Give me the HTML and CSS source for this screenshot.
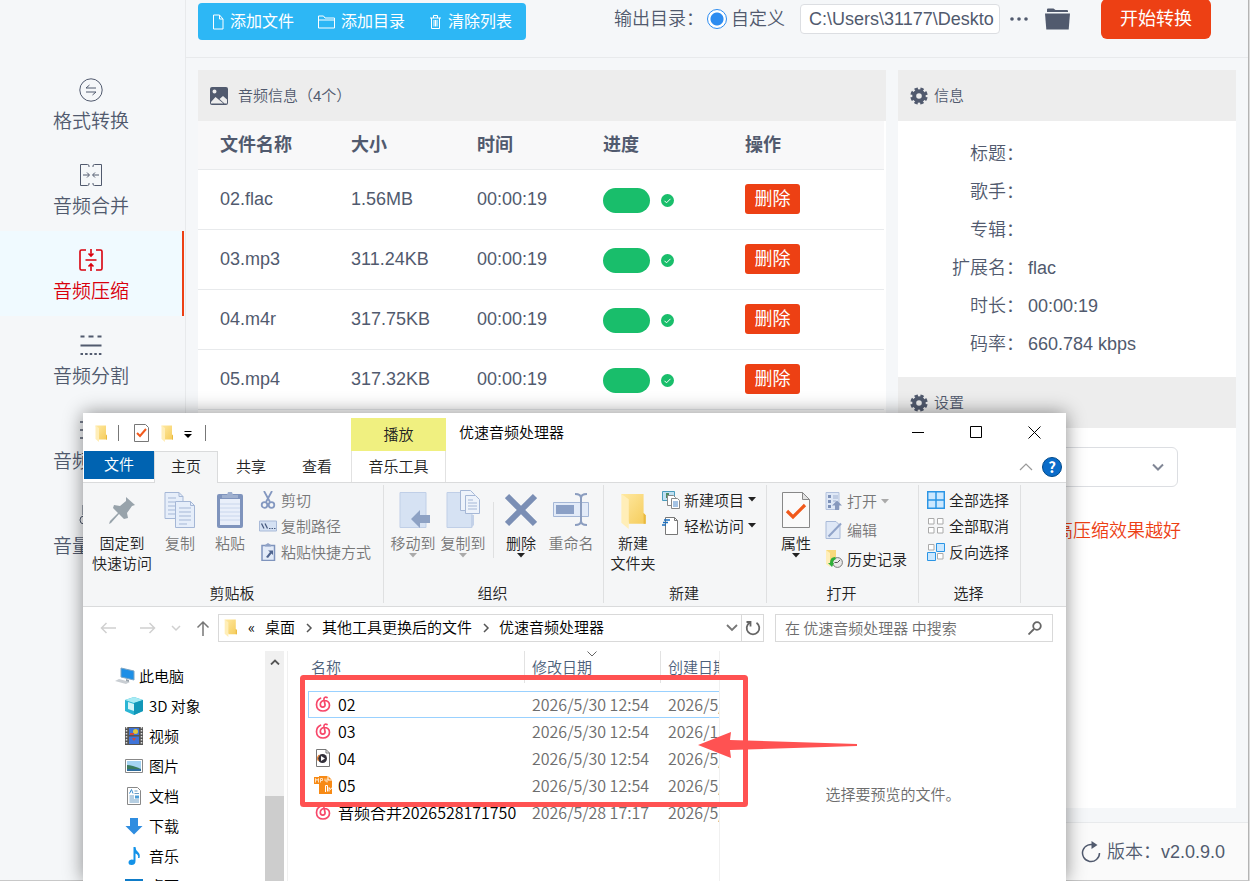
FILE: index.html
```html
<!DOCTYPE html>
<html lang="zh-CN">
<head>
  <meta charset="UTF-8">
  <meta name="viewport" content="width=device-width, initial-scale=1.0">
  <title>优速音频处理器</title>
  <link rel="stylesheet" href="styles.css">
</head>
<body>
  <!-- shared icons -->
  <svg class="sprite" aria-hidden="true">
    <defs>
      <linearGradient id="g-folder" x1="0" y1="0" x2="1" y2="1">
        <stop offset="0" stop-color="#ffe9a2"/><stop offset="1" stop-color="#f5cc5b"/>
      </linearGradient>
    </defs>
    <symbol id="i-folder" viewBox="0 0 24 34">
      <path d="M1 1h21v18l2 2v8H8z" fill="url(#g-folder)"/>
      <path d="M1 1l7 5v28l-7-6z" fill="#ffeeb8"/>
      <path d="M22 19l2 2v8h-2z" fill="#e9b93f"/>
    </symbol>
    <symbol id="i-gear" viewBox="0 0 18 18">
      <g fill="none" stroke="currentColor">
        <circle cx="9" cy="9" r="4.800" stroke-width="4"/>
        <circle cx="9" cy="9" r="7.300" stroke-width="2.800" stroke-dasharray="3.330 2.400" transform="rotate(9 9 9)"/>
      </g>
    </symbol>
    <symbol id="i-music" viewBox="0 0 16 16">
      <path d="M5.500 2.200C3 3.300 1.500 6 1.500 8.800 1.500 12.500 4.300 15 8 15s6.500-2.500 6.500-5.800C14.500 6 12 4.500 9.500 4.500 7 4.500 5.300 6 5.300 8.300c0 1.700 1 2.900 2.500 2.900s2.500-1.200 2.200-2.700L9 3.500C8.700 1.500 10.500.500 12 1.500" fill="none" stroke="#f7476a" stroke-width="1.700" stroke-linecap="round"/>
    </symbol>
    <symbol id="i-caret" viewBox="0 0 8 5"><path d="M0 0h8L4 4.500z" fill="currentColor"/></symbol>
    <symbol id="i-done" viewBox="0 0 13 13">
      <circle cx="6.500" cy="6.500" r="6.500" fill="#19be6b"/>
      <path d="M3.500 6.800l2 2 4-4" fill="none" stroke="#fff"/>
    </symbol>
    <symbol id="i-next" viewBox="0 0 8 10"><path d="M2 1l4 4-4 4" fill="none" stroke="#555" stroke-width="1.500"/></symbol>
  </svg>

  <div class="app">
    <nav class="sidebar">
      <a class="nav-item" href="#">
        <svg viewBox="0 0 24 24"><circle cx="12" cy="12" r="11.200"/><path d="M7 10h10M7 10l3.500-3M7 14h10M17 14l-3.500 3"/></svg>
        <span>格式转换</span>
      </a>
      <a class="nav-item" href="#">
        <svg viewBox="0 0 24 24"><path d="M10 4V3q0-1.500-1.500-1.500H1.500v21H8.500q1.500 0 1.500-1.500v-1M14 4V3q0-1.500 1.500-1.500h7v21h-7q-1.500 0-1.500-1.500v-1M4 12h6M8 9.500l2.500 2.500L8 14.500M20 12h-6M16 9.500L13.500 12l2.500 2.500"/></svg>
        <span>音频合并</span>
      </a>
      <a class="nav-item active" href="#">
        <svg viewBox="0 0 24 24"><path d="M7 2H2.500Q1 2 1 3.500v17Q1 22 2.500 22H7M17 2h4.500Q23 2 23 3.500v17q0 1.500-1.500 1.500H17M6.500 12h11M12 1v7M9.500 5.500L12 8l2.500-2.500M12 23v-7M9.500 18.500L12 16l2.500 2.500"/></svg>
        <span>音频压缩</span>
      </a>
      <a class="nav-item" href="#">
        <svg viewBox="0 0 24 24"><path d="M1.500 3.500h4M9.500 3.500h5M18.500 3.500h4M1.500 12.500h21" stroke-width="2"/><path d="M1.500 21h21" stroke-width="2" stroke-dasharray="2.500 2.100"/></svg>
        <span>音频分割</span>
      </a>
      <a class="nav-item" href="#">
        <svg viewBox="0 0 24 24"><path d="M1 4h14M1 12h14M1 20h14" stroke-width="1.500"/></svg>
        <span>音频提取</span>
      </a>
      <a class="nav-item" href="#">
        <svg viewBox="0 0 24 24"><path d="M4 2v10"/><circle cx="5" cy="17" r="4"/></svg>
        <span>音量调整</span>
      </a>
    </nav>

    <main class="main">
      <header class="toolbar">
        <div class="file-actions">
          <button type="button">
            <svg width="12" height="16" viewBox="0 0 12 16"><path d="M1.500 1h6L11 5v10H1.500zM7.500 1v4H11"/></svg>
            添加文件
          </button>
          <button type="button">
            <svg width="17" height="16" viewBox="0 0 17 16"><path d="M.500 14V2h5l1.500 2h9.500v10zM.500 6h16"/></svg>
            添加目录
          </button>
          <button type="button">
            <svg width="13" height="16" viewBox="0 0 13 16"><path d="M1 4h11M4.500 4V1.500h4V4M2.500 4v10.500h8V4M5 6v6.500M6.500 6v6.500M8 6v6.500"/></svg>
            清除列表
          </button>
        </div>

        <div class="output">
          <span>输出目录：</span>
          <label class="radio"><input type="radio" name="output" checked>自定义</label>
          <input class="output-path" type="text" value="C:\Users\31177\Deskto" aria-label="输出目录" readonly>
          <button class="more" type="button" aria-label="浏览">
            <svg width="18" height="6" viewBox="0 0 18 6"><circle cx="2" cy="3" r="1.800"/><circle cx="9" cy="3" r="1.800"/><circle cx="16" cy="3" r="1.800"/></svg>
          </button>
          <button class="open-dir" type="button" aria-label="打开目录">
            <svg width="25" height="22" viewBox="0 0 25 22"><path d="M2 4V1.500Q2 .500 3 .500h5.500l2 1.500H22q1 0 1 1v1z"/><path d="M0 5.500h25l-1.300 16H1.300z"/></svg>
          </button>
          <button class="start" type="button">开始转换</button>
        </div>
      </header>

      <div class="content">
        <section class="panel list-panel">
          <h2 class="panel-title list-title">
            <svg width="18" height="18" viewBox="0 0 18 18"><path fill="currentColor" fill-rule="evenodd" d="M2 0h14q2 0 2 2v14q0 2-2 2H2q-2 0-2-2V2q0-2 2-2zM4.500 2.500a2 2 0 1 0 0 4 2 2 0 0 0 0-4zM1 15v1.500h12.500L5.500 10zM9.500 12l5 4.500H17v-4l-4-3.500z"/></svg>
            音频信息（4个）
          </h2>
          <table class="audio-table">
            <colgroup><col class="c-name"><col class="c-size"><col class="c-time"><col class="c-progress"><col></colgroup>
            <thead>
              <tr><th>文件名称</th><th>大小</th><th>时间</th><th>进度</th><th>操作</th></tr>
            </thead>
            <tbody>
              <tr>
                <td>02.flac</td><td>1.56MB</td><td>00:00:19</td>
                <td><div class="progress"><span class="bar"></span><svg width="13" height="13"><use href="#i-done"/></svg></div></td>
                <td><button class="delete" type="button">删除</button></td>
              </tr>
              <tr>
                <td>03.mp3</td><td>311.24KB</td><td>00:00:19</td>
                <td><div class="progress"><span class="bar"></span><svg width="13" height="13"><use href="#i-done"/></svg></div></td>
                <td><button class="delete" type="button">删除</button></td>
              </tr>
              <tr>
                <td>04.m4r</td><td>317.75KB</td><td>00:00:19</td>
                <td><div class="progress"><span class="bar"></span><svg width="13" height="13"><use href="#i-done"/></svg></div></td>
                <td><button class="delete" type="button">删除</button></td>
              </tr>
              <tr>
                <td>05.mp4</td><td>317.32KB</td><td>00:00:19</td>
                <td><div class="progress"><span class="bar"></span><svg width="13" height="13"><use href="#i-done"/></svg></div></td>
                <td><button class="delete" type="button">删除</button></td>
              </tr>
            </tbody>
          </table>
        </section>

        <section class="panel info-panel">
          <h2 class="panel-title"><svg width="18" height="18"><use href="#i-gear"/></svg>信息</h2>
          <dl class="info">
            <dt>标题：</dt><dd></dd>
            <dt>歌手：</dt><dd></dd>
            <dt>专辑：</dt><dd></dd>
            <dt>扩展名：</dt><dd>flac</dd>
            <dt>时长：</dt><dd>00:00:19</dd>
            <dt>码率：</dt><dd>660.784 kbps</dd>
          </dl>
          <h2 class="panel-title"><svg width="18" height="18"><use href="#i-gear"/></svg>设置</h2>
          <div class="settings">
            <div class="select-box">
              <select aria-label="设置"><option></option></select>
              <svg width="14" height="9" viewBox="0 0 14 9"><path d="M2 1.500l5 5 5-5"/></svg>
            </div>
            <p class="hint">高压缩效果越好</p>
          </div>
        </section>
      </div>

      <footer class="footer">
        <svg width="20" height="22" viewBox="0 0 20 22"><path d="M14 4.500A8.500 8.500 0 1 0 18.500 12" fill="none" stroke="currentColor" stroke-width="1.500"/><path d="M10.500 0l6 4-6 4z" fill="currentColor"/></svg>
        <span>版本：</span><span>v2.0.9.0</span>
      </footer>
    </main>
  </div>

  <div class="explorer">
    <div class="titlebar">
      <div class="quick-access">
        <svg width="12" height="17"><use href="#i-folder"/></svg>
        <i class="bar-sep"></i>
        <svg class="qa-check" width="15" height="18" viewBox="0 0 15 18"><path d="M.500.500h11l3 3v14H.500z" fill="#fff" stroke="#777"/><path d="M3 9l3 3 6-7" fill="none" stroke="#f25a1d" stroke-width="2"/></svg>
        <svg width="12" height="17"><use href="#i-folder"/></svg>
        <svg class="qa-menu" width="8" height="7" viewBox="0 0 8 7"><path d="M.500 0h7v1h-7zM0 3h8L4 7z"/></svg>
        <i class="bar-sep"></i>
      </div>
      <div class="context-tab">播放</div>
      <div class="window-title">优速音频处理器</div>
      <div class="window-buttons">
        <button type="button" aria-label="最小化"><svg width="13" height="13" viewBox="0 0 13 13"><path d="M0 6.500h12"/></svg></button>
        <button type="button" aria-label="最大化"><svg width="13" height="13" viewBox="0 0 13 13"><path d="M.500.500h11v11H.500z"/></svg></button>
        <button type="button" aria-label="关闭"><svg width="13" height="13" viewBox="0 0 13 13"><path d="M.500.500l12 12M12.500.500l-12 12"/></svg></button>
      </div>
    </div>

    <div class="tabs">
      <button class="tab tab-file" type="button">文件</button>
      <button class="tab tab-home" type="button">主页</button>
      <button class="tab" type="button">共享</button>
      <button class="tab" type="button">查看</button>
      <button class="tab tab-context" type="button">音乐工具</button>
      <div class="tabs-right">
        <svg width="14" height="8" viewBox="0 0 14 8"><path d="M1 7l6-6 6 6" fill="none" stroke="#999" stroke-width="1.200"/></svg>
        <button class="help" type="button" aria-label="帮助">?</button>
      </div>
    </div>

    <div class="ribbon">
      <div class="group group-clipboard">
        <div class="group-body">
          <button class="big wide" type="button">
            <svg width="28" height="40" viewBox="0 0 28 40"><path d="M18 7l9 8-3 1-5 7 1 5-4 1-5-5-8 9-2 1 1-3 8-8-5-5 1-3 6 1 6-5z" fill="#98a3ab"/></svg>
            <span>固定到<br>快速访问</span>
          </button>
          <button class="big off" type="button">
            <svg width="32" height="40" viewBox="0 0 32 40"><g fill="#e6eefa" stroke="#a5b7d6"><path d="M1 2.500h14l4 4v22H1z"/><path d="M11.500 11.500h15l4 4v22h-19z"/><path d="M15 2.500v4h4M26.500 11.500v4h4M4 8h8M4 12h7M4 16h7M4 20h7M4 24h7M15 18h12M15 22h12M15 26h12M15 30h12M15 34h8" fill="none"/></g></svg>
            <span>复制</span>
          </button>
          <button class="big off" type="button">
            <svg width="28" height="40" viewBox="0 0 28 40"><rect x="1" y="4" width="26" height="34" rx="2" fill="#7f94bd"/><path d="M4 9h20v26H4z" fill="#e9effa"/><path d="M4 14h20M4 18h20M4 22h20M4 26h20M4 30h20" stroke="#c9d6ec"/><path d="M6 8V5h5l1-3h4l1 3h5v3z" fill="#9fb0cf"/></svg>
            <span>粘贴</span>
          </button>
          <div class="small-list">
            <button class="small off" type="button">
              <svg width="18" height="18" viewBox="0 0 18 18"><g fill="none" stroke="#8498c0" stroke-width="1.800"><path d="M5 0l6 11M13 0L7 11"/><circle cx="5.500" cy="14" r="2.800"/><circle cx="12.500" cy="14" r="2.800"/></g></svg>剪切
            </button>
            <button class="small off" type="button">
              <svg width="18" height="18" viewBox="0 0 18 18"><path d="M.500 4h17v10H.500z" fill="#d5e1f3" stroke="#a9bad8"/><path d="M2.500 6.500l2.500 5M6 6.500l2.500 5" stroke="#46597e" stroke-width="1.300"/><path d="M10 11.500h1.500M12.500 11.500H14M15 11.500h1.500" stroke="#46597e"/></svg>复制路径
            </button>
            <button class="small off" type="button">
              <svg width="18" height="18" viewBox="0 0 18 18"><path d="M3 2.500h12.500v15H3z" fill="#e3ebf8" stroke="#7f94bd" stroke-width="1.500"/><path d="M6 3.500V2l3-2 3 2v1.500z" fill="#8fa2c6"/><path d="M7 14l4-5-2-1.500h5V12l-1.500-1.500L9 15z" fill="#50658f"/></svg>粘贴快捷方式
            </button>
          </div>
        </div>
        <div class="group-name">剪贴板</div>
      </div>

      <div class="group group-organize">
        <div class="group-body">
          <button class="big off" type="button">
            <svg width="34" height="40" viewBox="0 0 34 40"><path d="M4 2.500h26v35H4z" fill="#d6e2f3" stroke="#c0cfe7"/><path d="M15 29l9-9v5h10v8H24v5z" fill="#8ea2c4"/></svg>
            <span>移动到</span><svg class="caret" width="8" height="5"><use href="#i-caret"/></svg>
          </button>
          <button class="big off" type="button">
            <svg width="34" height="40" viewBox="0 0 34 40"><path d="M1 2.500h25v35H1z" fill="#d6e2f3" stroke="#c0cfe7"/><path d="M25 25h3v10l-3 3z" fill="#c3d1e8"/><g fill="#eef3fb" stroke="#a5b7d6"><path d="M14.500.500h10l4 4v16h-14z"/><path d="M19.500 5.500h10l4 4v14h-14z"/><path d="M22 10h5M22 13h9M22 16h9M22 19h9"/></g></svg>
            <span>复制到</span><svg class="caret" width="8" height="5"><use href="#i-caret"/></svg>
          </button>
          <i class="inner-sep"></i>
          <button class="big" type="button">
            <svg width="32" height="40" viewBox="0 0 32 40"><path d="M2 6l28 28M30 6L2 34" stroke="#7b8fb5" stroke-width="6"/></svg>
            <span>删除</span><svg class="caret" width="8" height="5"><use href="#i-caret"/></svg>
          </button>
          <button class="big off" type="button">
            <svg width="36" height="40" viewBox="0 0 36 40"><path d="M.500 12.500h35v14H.500z" fill="#e3ebf8" stroke="#a5b7d6"/><path d="M3 15h18v9H3z" fill="#8ba0c6"/><path d="M22 4q6 0 6 4v23q0 4-6 4M34 4q-6 0-6 4v23q0 4 6 4" fill="none" stroke="#8b9dbf" stroke-width="2"/></svg>
            <span>重命名</span>
          </button>
        </div>
        <div class="group-name">组织</div>
      </div>

      <div class="group group-new">
        <div class="group-body">
          <button class="big" type="button">
            <svg width="26" height="40" viewBox="0 -2 26 38"><use href="#i-folder" width="26" height="36"/></svg>
            <span>新建<br>文件夹</span>
          </button>
          <div class="small-list">
            <button class="small" type="button">
              <svg width="18" height="18" viewBox="0 0 18 18"><path d="M.500.500h12v9H.500z" fill="#bfe0f2" stroke="#4a9cbd"/><path d="M4 2h3v5H4z" fill="#4a8a62"/><path d="M5.500 4.500h6l2 2v8h-8z" fill="#fff" stroke="#888"/><path d="M9.500 7.500h6l2 2v8h-8z" fill="#fff" stroke="#888"/><path d="M11 11h5M11 13h5M11 15h5" stroke="#4a86c8"/></svg>新建项目<svg class="caret" width="8" height="5"><use href="#i-caret"/></svg>
            </button>
            <button class="small" type="button">
              <svg width="18" height="18" viewBox="0 0 18 18"><path d="M3.500.500h9l3 3v14h-12z" fill="#fff" stroke="#777"/><path d="M12.500.500v3h3" fill="none" stroke="#777"/><path d="M2 3h6M1 5.500h5M0 8h4" stroke="#1b6fc0" stroke-width="1.400"/></svg>轻松访问<svg class="caret" width="8" height="5"><use href="#i-caret"/></svg>
            </button>
          </div>
        </div>
        <div class="group-name">新建</div>
      </div>

      <div class="group group-open">
        <div class="group-body">
          <button class="big" type="button">
            <svg width="28" height="40" viewBox="0 0 28 40"><path d="M.500 2.500h20l7 7v28H.500z" fill="#fafafa" stroke="#888"/><path d="M20.500 2.500v7h7z" fill="#e2e2e2" stroke="#888"/><path d="M5 21l6 6 12-12" fill="none" stroke="#f1591b" stroke-width="3.200"/></svg>
            <span>属性</span><svg class="caret" width="8" height="5"><use href="#i-caret"/></svg>
          </button>
          <div class="small-list tall">
            <button class="small off" type="button">
              <svg width="18" height="18" viewBox="0 0 18 18"><path d="M1 .500h13v17H1z" fill="#dfe8f6" stroke="#b3c2dd"/><path d="M3 3h3v3H3zM3 8h3v3H3zM3 13h3v3H3z" fill="#7d91b8"/><path d="M8 4h5M8 6h5M8 9h3" stroke="#9fb0cf"/><path d="M7 13.500l5-5 5 5h-3V18h-4v-4.500z" fill="#8799bd"/></svg>打开<svg class="caret" width="8" height="5"><use href="#i-caret"/></svg>
            </button>
            <button class="small off" type="button">
              <svg width="18" height="18" viewBox="0 0 18 18"><path d="M1 .500h10l4 4v13H1z" fill="#dfe8f6" stroke="#a9bad8"/><path d="M3.500 15.500L16 2.500" stroke="#91a4c9" stroke-width="2"/></svg>编辑
            </button>
            <button class="small" type="button">
              <svg width="18" height="18" viewBox="0 0 18 18"><path d="M1 0h10v15H5z" fill="#f8d97c"/><path d="M1 0l4 3v14l-4-3z" fill="#ffeeb8"/><circle cx="12.500" cy="12.500" r="4.900" fill="#e8e8e8" stroke="#777"/><path d="M12.500 12.500l2.500-2.500M12.500 12.500h-3" stroke="#555"/><path d="M10 7q-5 0-5 6H3l4 4 2-4H8q0-3 3-4z" fill="#2fae3a"/></svg>历史记录
            </button>
          </div>
        </div>
        <div class="group-name">打开</div>
      </div>

      <div class="group group-select">
        <div class="group-body">
          <div class="small-list">
            <button class="small" type="button">
              <svg width="18" height="18" viewBox="0 0 18 18"><path d="M.700.700h16.600v16.600H.700zM9 0v18M0 9h18" fill="#cbe8ff" stroke="#2b95e5" stroke-width="1.500"/></svg>全部选择
            </button>
            <button class="small" type="button">
              <svg width="18" height="18" viewBox="0 0 18 18"><path d="M1.500 1.500h5.500v5.500H1.500zM10.500 1.500H16v5.500h-5.500zM1.500 10.500h5.500V16H1.500zM10.500 10.500H16V16h-5.500z" fill="#fff" stroke="#aaa"/></svg>全部取消
            </button>
            <button class="small" type="button">
              <svg width="18" height="18" viewBox="0 0 18 18"><path d="M1.500 1.500h5.500v5.500H1.500zM10.500 10.500H16V16h-5.500z" fill="#fff" stroke="#aaa"/><path d="M9.500.500h8v8h-8zM.500 9.500h8v8h-8z" fill="#cbe8ff" stroke="#2b95e5"/></svg>反向选择
            </button>
          </div>
        </div>
        <div class="group-name">选择</div>
      </div>
    </div>

    <div class="address-row">
      <div class="history">
        <svg class="back" width="16" height="14" viewBox="0 0 16 14"><path d="M16 7H1M6.500 2L1.500 7l5 5" stroke="#d0d0d0"/></svg>
        <svg width="16" height="14" viewBox="0 0 16 14"><path d="M0 7h15M9.500 2l5 5-5 5" stroke="#d0d0d0"/></svg>
        <svg width="10" height="14" viewBox="0 0 10 14"><path d="M1 5l4 4 4-4" stroke="#d0d0d0"/></svg>
        <svg width="14" height="16" viewBox="0 0 14 16"><path d="M7 16V2M1.500 7.500L7 2l5.500 5.500" stroke="#777" stroke-width="1.800"/></svg>
      </div>
      <div class="address">
        <svg width="13" height="18"><use href="#i-folder"/></svg>
        <span class="laquo">«</span>
        <a href="#">桌面</a>
        <svg class="next" width="8" height="10"><use href="#i-next"/></svg>
        <a href="#">其他工具更换后的文件</a>
        <svg class="next" width="8" height="10"><use href="#i-next"/></svg>
        <a href="#">优速音频处理器</a>
        <svg class="drop" width="12" height="8" viewBox="0 0 12 8"><path d="M1 1l5 5 5-5" fill="none" stroke="#777" stroke-width="1.800"/></svg>
        <button class="refresh" type="button" aria-label="刷新"><svg width="16" height="16" viewBox="0 0 16 16"><path d="M4.500 2.800A6.300 6.300 0 1 0 11.500 2.800M1.500 2h4v4.500" fill="none" stroke="#666" stroke-width="1.800"/></svg></button>
      </div>
      <div class="search">
        <input type="text" placeholder="在 优速音频处理器 中搜索" aria-label="搜索">
        <svg width="14" height="14" viewBox="0 0 14 14"><circle cx="9" cy="5" r="3.800"/><path d="M6 8l-5.500 5.500"/></svg>
      </div>
    </div>

    <div class="explorer-body">
      <div class="tree">
        <ul>
          <li class="root"><svg width="20" height="18" viewBox="0 0 20 18"><path d="M6 1l13 3v9L6 10z" fill="#1e8fe6" stroke="#7aa4c4"/><path d="M0 14l4-2 11 3-4 2z" fill="#c9ced3"/><path d="M11 12l3 1v2l-3-1z" fill="#98a2ab"/></svg>此电脑</li>
          <li><svg width="18" height="18" viewBox="0 0 18 18"><path d="M9 0l9 3v11l-9 4-9-4V3z" fill="#2bb5d4"/><path d="M9 0l9 3-9 3-9-3z" fill="#a8ebf4"/><path d="M9 6l9-3v11l-9 4z" fill="#1297b8"/><path d="M3 5l6 2v7l-6-2z" fill="#d6f5f9"/></svg>3D 对象</li>
          <li><svg width="18" height="18" viewBox="0 0 18 18"><path d="M0 0h18v18H0z" fill="#555"/><path d="M1.500 0v18M16.500 0v18" stroke="#ddd" stroke-width="1.500" stroke-dasharray="1.500 1.500"/><path d="M4 1h10v7H4zM4 9.500h10V17H4z" fill="#3f74d8"/><circle cx="10.500" cy="4.500" r="2.500" fill="#e0c73a"/><path d="M5 6h4v2H5zM7 11h4l-2 3z" fill="#d34a3c"/></svg>视频</li>
          <li><svg width="18" height="18" viewBox="0 0 18 18"><path d="M.500 2.500h17v13H.500z" fill="#fff" stroke="#888"/><path d="M2 4h14v10H2z" fill="#a4d3f2"/><path d="M2 8q5 0 14 4v2H2z" fill="#397a5d"/><path d="M2 12h14v2H2z" fill="#2d6c9c"/></svg>图片</li>
          <li><svg width="18" height="18" viewBox="0 0 18 18"><path d="M2.500.500h10l3 3v14h-13z" fill="#fff" stroke="#888"/><path d="M4.500 6.500l2-4 1.500 4" fill="none" stroke="#3b8ed0"/><path d="M9.500 4h3M9.500 6.500h4.500M4.500 9H9M4.500 11H9M4.500 13h9.500M4.500 15h9.500" stroke="#6d9ec5"/><path d="M10 8.500h4v3h-4z" fill="#4e9ed8"/></svg>文档</li>
          <li><svg width="18" height="18" viewBox="0 0 18 18"><path d="M5 1h8v8h4.500L9 17.500.500 9H5z" fill="#2f8de0"/></svg>下载</li>
          <li><svg width="18" height="18" viewBox="0 0 18 18"><path d="M8.500 0h2q0 3 2.500 5t1.500 6h-1.500q1-3-2.500-4.500V14q0 4-4 4-3 0-3-2.500Q3.500 13 6.500 12.500q1 0 2 .300z" fill="#1392e8"/></svg>音乐</li>
          <li><svg width="18" height="18" viewBox="0 0 18 18"><path d="M0 2h18v12H0z" fill="#0f7cc8"/></svg>桌面</li>
        </ul>
        <div class="scrollbar">
          <svg width="10" height="6" viewBox="0 0 10 6"><path d="M1 5.500l4-4 4 4" fill="none" stroke="#555" stroke-width="1.800"/></svg>
          <div class="thumb"></div>
        </div>
      </div>

      <div class="files">
        <table>
          <colgroup><col class="f-name"><col class="f-date"><col class="f-date"></colgroup>
          <thead>
            <tr>
              <th>名称</th>
              <th>修改日期<svg class="sort" width="10" height="6" viewBox="0 0 10 6"><path d="M.500.500L5 5 9.500.500" fill="none" stroke="#666"/></svg></th>
              <th>创建日期</th>
            </tr>
          </thead>
          <tbody>
            <tr class="selected"><td><span class="file"><svg width="16" height="16"><use href="#i-music"/></svg>02</span></td><td>2026/5/30 12:54</td><td>2026/5/30 12:54</td></tr>
            <tr><td><span class="file"><svg width="16" height="16"><use href="#i-music"/></svg>03</span></td><td>2026/5/30 12:54</td><td>2026/1/30 12:54</td></tr>
            <tr><td><span class="file"><svg width="16" height="18" viewBox="0 0 16 18"><path d="M1.500.500h9.500l3.500 3.500v13.500h-13z" fill="#fff" stroke="#777"/><path d="M11 .500v3.500h3.500" fill="none" stroke="#777"/><circle cx="7.500" cy="9.500" r="4.500" fill="#33303a"/><path d="M3.500 12a4.500 4.500 0 0 1 1-6" fill="none" stroke="#e98032" stroke-width="1.200"/><path d="M6 7l4 2.500L6 12z" fill="#fff"/></svg>04</span></td><td>2026/5/30 12:54</td><td>2026/5/30 12:54</td></tr>
            <tr><td><span class="file"><svg class="mp4" width="20" height="18" viewBox="0 0 20 18"><path d="M6 0h9l4 4v14H6V8H1V1h5z" fill="#f78a15"/><path d="M2.500 6.500v-4l1.500 2 1.500-2v4M7.500 6.500v-4h2v2h-2M12 2.500v2.500h2.500M14 2.500v4" fill="none" stroke="#fde0bf"/><path d="M15 0v4h4" fill="none" stroke="#fff"/><path d="M12.500 16V9.500h2v6M16 15.500v-4l1.500 2 1.500-2" fill="none" stroke="#fff"/></svg>05</span></td><td>2026/5/30 12:54</td><td>2026/5/30 12:54</td></tr>
            <tr><td><span class="file"><svg width="16" height="16"><use href="#i-music"/></svg>音频合并2026528171750</span></td><td>2026/5/28 17:17</td><td>2026/5/28 17:17</td></tr>
          </tbody>
        </table>
      </div>

      <div class="preview">选择要预览的文件。</div>
    </div>
  </div>

  <!-- red frame and arrow over the converted files -->
  <svg class="marker" width="560" height="134" viewBox="0 0 560 134">
    <rect x="2.500" y="2.500" width="443" height="127" rx="1" fill="none" stroke="#ff5252" stroke-width="5"/>
    <path d="M398 70l33-13-1 8 127 4v2l-127 4 1 8z" fill="#ff5252"/>
  </svg>
</body>
</html>
```

FILE: styles.css
```css
* {
  box-sizing: border-box;
}

body {
  position: relative;
  height: 100vh;
  margin: 0;
  overflow: hidden;
  background-color: #dcdcdc;
  color: #515a6e;
  font-family: "Liberation Sans", "Noto Sans CJK SC", sans-serif;
  font-size: 18px;
  font-weight: 350;
  line-height: 24px;
}

button,
input,
select {
  margin: 0;
  padding: 0;
  border: none;
  background: none;
  color: inherit;
  font: inherit;
}

button {
  cursor: pointer;
}

a {
  color: inherit;
  text-decoration: none;
}

svg {
  flex: none;
}

.sprite {
  position: absolute;
  width: 0;
  height: 0;
}

/* main application */

.app {
  display: flex;
  height: 100%;
  margin-right: 1px;
  border-right: 1px solid #b4b4b4;
  border-bottom: 1px solid #c8c8c8;
  background-color: #f5f7f9;
  overflow: hidden;
}

.sidebar {
  flex: none;
  width: 186px;
  padding-top: 61px;
  padding-right: 1px;
  border-right: 1px solid #e8eaec;
}

.nav-item {
  display: flex;
  flex-direction: column;
  align-items: center;
  gap: 6px;
  height: 85px;
  padding-top: 17px;
  border-right: 2px solid transparent;
  font-size: 19px;
  line-height: 28px;
}

.nav-item svg {
  width: 24px;
  height: 24px;
  fill: none;
  stroke: currentColor;
  stroke-width: 1;
}

.nav-item.active {
  border-right-color: #ed4014;
  background-color: #f0faff;
  color: #d9000d;
}

.nav-item.active svg {
  stroke-width: 1.6;
}

.main {
  display: flex;
  flex: 1;
  flex-direction: column;
  min-width: 0;
}

.toolbar {
  display: flex;
  align-items: flex-start;
  justify-content: space-between;
  height: 58px;
  padding: 0 37px 0 12px;
  border-bottom: 1px solid #e8eaec;
}

.file-actions {
  display: flex;
  gap: 4px;
  height: 37px;
  margin-top: 3px;
  padding: 0 4px;
  border-radius: 4px;
  background-color: #2db7f5;
  color: #fff;
  font-size: 16px;
  font-weight: 400;
}

.file-actions button {
  display: flex;
  align-items: center;
  gap: 6px;
  padding: 0 10px;
}

.file-actions svg {
  fill: none;
  stroke: #fff;
}

.output {
  display: flex;
  align-items: center;
  height: 38px;
}

.radio {
  display: flex;
  align-items: center;
  gap: 4px;
  margin: 0 15px 0 3px;
}

.radio input {
  width: 20px;
  height: 20px;
  border: 1px solid #2d8cf0;
  border-radius: 50%;
  background: radial-gradient(circle, #2d8cf0 6px, #fff 7px);
  appearance: none;
}

.output-path {
  width: 200px;
  height: 30px;
  padding: 0 0 0 8px;
  border: 1px solid #dcdee2;
  border-radius: 4px;
  background-color: #fff;
}

.more,
.open-dir {
  display: flex;
  color: #515a6e;
  fill: currentColor;
}

.more {
  margin: 0 17px 0 10px;
}

.start {
  width: 110px;
  height: 40px;
  margin-left: 31px;
  border-radius: 6px;
  background-color: #ed4014;
  color: #fff;
  font-weight: 400;
}

.content {
  display: flex;
  flex: 1;
  gap: 12px;
  min-height: 0;
  padding: 12px 12px 14px;
}

.panel {
  display: flex;
  flex-direction: column;
  background-color: #fff;
}

.list-panel {
  flex: 1;
  min-width: 0;
}

.info-panel {
  flex: none;
  width: 338px;
}

.panel-title {
  display: flex;
  flex: none;
  align-items: center;
  gap: 6px;
  height: 51px;
  margin: 0;
  padding: 0 12px;
  background-color: #ededed;
  font-size: 15px;
  font-weight: 350;
}

.list-title {
  gap: 10px;
}

.audio-table {
  width: calc(100% - 2px);
  border-collapse: collapse;
  table-layout: fixed;
}

.c-name {
  width: 131px;
}

.c-size,
.c-time {
  width: 126px;
}

.c-progress {
  width: 142px;
}

.audio-table th,
.audio-table td {
  height: 60px;
  padding: 0 0 0 22px;
  border-bottom: 1px solid #e8eaec;
  text-align: left;
}

.audio-table th {
  height: 48px;
  background-color: #f8f8f9;
  font-weight: 700;
}

.progress {
  display: flex;
  align-items: center;
  gap: 11px;
  padding-top: 2px;
}

.bar {
  width: 47px;
  height: 25px;
  border-radius: 13px;
  background-color: #19be6b;
}

.delete {
  display: block;
  width: 55px;
  height: 30px;
  border-radius: 3px;
  background-color: #ed4014;
  color: #fff;
  font-weight: 400;
}

.info {
  display: grid;
  grid-template-columns: 126px 1fr;
  grid-auto-rows: 38px;
  column-gap: 4px;
  align-items: center;
  margin: 0;
  padding: 14px 0;
}

.info dt {
  text-align: right;
}

.info dd {
  margin: 0;
}

.settings {
  padding: 19px 55px 0 80px;
}

.select-box {
  position: relative;
}

.select-box select {
  display: block;
  width: 200px;
  height: 40px;
  border: 1px solid #dcdee2;
  border-radius: 6px;
  background-color: #fff;
  appearance: none;
}

.select-box svg {
  position: absolute;
  top: 16px;
  left: 173px;
  fill: none;
  stroke: #808695;
  stroke-width: 2;
}

.hint {
  margin: 30px 0 0;
  color: #ed4014;
  line-height: 28px;
  text-align: right;
}

.footer {
  display: flex;
  flex: none;
  align-items: center;
  justify-content: flex-end;
  height: 58px;
  padding-right: 23px;
  border-top: 1px solid #e8eaec;
  background-color: #fafafa;
}

.footer svg {
  margin-right: 6px;
}

/* file explorer window */

.explorer {
  position: absolute;
  top: 413px;
  bottom: 0;
  left: 83px;
  right: 184px;
  display: flex;
  flex-direction: column;
  background-color: #fff;
  box-shadow: 0 0 18px rgba(0, 0, 0, 0.45);
  color: #222;
  font-family: "Noto Sans CJK SC", sans-serif;
  font-size: 15px;
  overflow: hidden;
}

.titlebar {
  display: flex;
  flex: none;
  height: 38px;
}

.quick-access {
  display: flex;
  align-items: center;
  width: 268px;
  padding: 2px 0 0 12px;
}

.bar-sep {
  width: 1px;
  height: 16px;
  margin: 0 15px 0 11px;
  background-color: #777;
}

.qa-check,
.qa-menu {
  margin-right: 12px;
}

.qa-menu {
  margin: 2px 2px 0 11px;
}

.context-tab {
  width: 95px;
  height: 33px;
  margin-top: 5px;
  background-color: #f0f080;
  line-height: 32px;
  text-align: center;
}

.window-title {
  flex: 1;
  padding-left: 13px;
  color: #000;
  line-height: 38px;
}

.window-buttons {
  display: flex;
  padding-right: 3px;
}

.window-buttons button {
  display: flex;
  align-items: center;
  justify-content: center;
  width: 58px;
}

.window-buttons svg {
  fill: none;
  stroke: #000;
}

.tabs {
  display: flex;
  flex: none;
  height: 32px;
  padding-left: 1px;
  border-bottom: 1px solid #dadbdc;
}

.tab {
  width: 66px;
  height: 31px;
  padding-bottom: 2px;
}

.tab-file {
  width: 70px;
  height: 28px;
  background-color: #0063b1;
  color: #fff;
}

.tab-home {
  width: 64px;
  height: 32px;
  border: 1px solid #dadbdc;
  border-bottom: none;
  background-color: #f5f6f7;
  padding-bottom: 4px;
}

.tab-context {
  width: 95px;
  margin-left: 1px;
  border-right: 1px solid #e2e2e2;
  border-left: 1px solid #e2e2e2;
}

.tabs-right {
  display: flex;
  align-items: center;
  gap: 9px;
  margin-left: auto;
  padding-right: 4px;
}

.help {
  width: 20px;
  height: 20px;
  border: 1px solid #00498a;
  border-radius: 50%;
  background-color: #0a6cc9;
  color: #fff;
  font-weight: 700;
  line-height: 18px;
}

.ribbon {
  display: flex;
  flex: none;
  height: 124px;
  padding: 2px 0 3px;
  border-bottom: 1px solid #dadbdc;
  background-color: #f5f6f7;
}

.group {
  display: flex;
  flex: none;
  flex-direction: column;
  justify-content: space-between;
  border-right: 1px solid #dfe0e1;
}

.group-clipboard {
  width: 301px;
}

.group-organize {
  width: 220px;
}

.group-new {
  width: 163px;
}

.group-open {
  width: 152px;
}

.group-select {
  width: 102px;
}

.group-body {
  display: flex;
  padding: 2px 0 0 4px;
}

.group-clipboard .group-body {
  padding-left: 6px;
}

.group-name {
  line-height: 20px;
  padding-right: 2px;
  text-align: center;
}

.big {
  display: flex;
  flex: none;
  flex-direction: column;
  align-items: center;
  width: 50px;
  padding-top: 3px;
  line-height: 20px;
  white-space: nowrap;
}

.big span {
  margin-top: 3px;
}

.big.wide {
  width: 66px;
}

.off {
  color: #777;
}

.caret {
  color: #222;
}

.off .caret {
  color: #aaa;
}

.inner-sep {
  width: 1px;
  height: 56px;
  margin: 15px 2px 0 5px;
  background-color: #dfe0e1;
}

.small-list {
  margin-left: 4px;
}

.small {
  display: flex;
  align-items: center;
  gap: 4px;
  height: 26px;
  padding-bottom: 1px;
  white-space: nowrap;
}

.tall .small {
  height: 29px;
}

.address-row {
  display: flex;
  flex: none;
  align-items: center;
  height: 44px;
  padding: 0 13px 2px 17px;
}

.history {
  display: flex;
  align-items: center;
  gap: 15px;
  margin-right: 8px;
}

.history .back {
  margin-right: 9px;
}

.history path {
  fill: none;
  stroke-width: 1.5;
}

.address {
  display: flex;
  flex: 1;
  align-items: center;
  height: 28px;
  padding-left: 5px;
  border: 1px solid #d9d9d9;
  color: #000;
}

.address a,
.laquo {
  padding-bottom: 2px;
}

.laquo {
  margin: 0 10px 0 11px;
}

.next {
  margin: 0 9px 0 10px;
}

.drop {
  margin-left: auto;
}

.refresh {
  display: flex;
  align-items: center;
  justify-content: center;
  width: 22px;
  height: 26px;
  margin-left: 3px;
  border-left: 1px solid #d9d9d9;
}

.search {
  display: flex;
  align-items: center;
  width: 278px;
  height: 28px;
  margin-left: 11px;
  padding: 0 10px 0 9px;
  border: 1px solid #d9d9d9;
}

.search input {
  flex: 1;
  min-width: 0;
}

.search input::placeholder {
  color: #6d6d6d;
  opacity: 1;
}

.search svg {
  fill: none;
  stroke: #666;
  stroke-width: 1.8;
}

.explorer-body {
  display: flex;
  flex: 1;
  min-height: 0;
}

.tree {
  display: flex;
  justify-content: space-between;
  width: 205px;
  padding-right: 3px;
  border-right: 1px solid #f0f0f0;
}

.tree ul {
  margin: 0;
  padding: 10px 0 0 42px;
  color: #000;
  list-style: none;
}

.tree li {
  display: flex;
  align-items: center;
  gap: 6px;
  height: 30px;
}

.tree .root {
  gap: 4px;
  margin-left: -10px;
}

.scrollbar {
  display: flex;
  flex-direction: column;
  align-items: center;
  width: 19px;
  padding-top: 8px;
  background-color: #f0f0f0;
}

.thumb {
  flex: 1;
  width: 100%;
  margin-top: 131px;
  background-color: #cdcdcd;
}

.files {
  flex: none;
  width: 432px;
  padding-left: 20px;
  border-right: 1px solid #f0f0f0;
  overflow: hidden;
}

.files table {
  width: 488px;
  border-collapse: separate;
  border-spacing: 0;
  table-layout: fixed;
}

.f-name {
  width: 216px;
}

.f-date {
  width: 136px;
}

.files th {
  position: relative;
  height: 40px;
  padding: 4px 0 0 8px;
  background: linear-gradient(#e2e2e2, #e2e2e2) left top / 1px 32px no-repeat;
  color: #4c607a;
  font-weight: 350;
  text-align: left;
  vertical-align: top;
}

.files th:first-child {
  padding-left: 3px;
  background: none;
}

.sort {
  position: absolute;
  top: 0;
  left: 63px;
}

.files td {
  height: 27px;
  padding: 0 0 2px 8px;
  color: #6d6d6d;
  font-size: 16px;
  white-space: nowrap;
}

.files .selected td {
  padding-bottom: 1px;
  border-top: 1px solid #99d1ff;
  border-bottom: 1px solid #99d1ff;
}

.files td:first-child {
  padding-left: 7px;
  color: #000;
}

.files .selected td:first-child {
  padding-left: 6px;
  border-left: 1px solid #99d1ff;
}

.file {
  display: flex;
  align-items: center;
  gap: 7px;
}

.mp4 {
  margin: 0 -2px;
}

.preview {
  flex: 1;
  padding-top: 131px;
  color: #6d6d6d;
  text-align: center;
}

.marker {
  position: absolute;
  top: 675px;
  left: 300px;
}
```
